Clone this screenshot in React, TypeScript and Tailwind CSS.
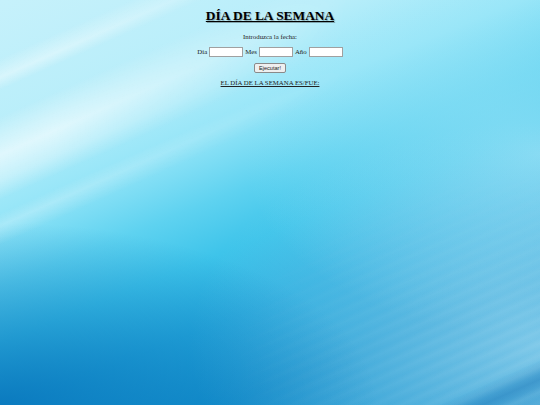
export default function App() {
  return (
    <div
      className="relative w-[540px] h-[405px] overflow-hidden text-black bg-[linear-gradient(158deg,#c6f1fb_0%,#b8eefa_22%,#98e6f8_34%,#5ed2f0_46%,#3ec4ea_55%,#28acde_66%,#1896d0_80%,#1890cc_100%)]"
      style={{ fontFamily: '"Liberation Serif", "Times New Roman", serif' }}
    >
      {/* lighter right side, darker lower left */}
      <div className="absolute inset-0 bg-[radial-gradient(ellipse_55%_45%_at_100%_38%,rgba(160,230,248,0.75),rgba(160,230,248,0)_100%)]" />
      <div className="absolute inset-0 bg-[radial-gradient(ellipse_65%_55%_at_100%_85%,rgba(165,222,244,0.7),rgba(165,222,244,0)_100%)]" />
      <div className="absolute inset-0 bg-[radial-gradient(ellipse_70%_45%_at_0%_100%,rgba(0,105,180,0.75),rgba(0,105,180,0)_100%)]" />
      {/* white streaks in the upper left */}
      <div className="absolute inset-0 [mask-image:linear-gradient(to_right,black_10%,transparent_65%)] bg-[linear-gradient(156deg,rgba(255,255,255,0)_9%,rgba(255,255,255,0.4)_12%,rgba(255,255,255,0)_14%,rgba(255,255,255,0)_18%,rgba(255,255,255,0.6)_24%,rgba(255,255,255,0.35)_28%,rgba(255,255,255,0)_31%,rgba(255,255,255,0)_33%,rgba(255,255,255,0.25)_35%,rgba(255,255,255,0)_38%)]" />
      {/* soft streaks in the lower right */}
      <div className="absolute inset-0 [mask-image:radial-gradient(ellipse_60%_50%_at_100%_90%,black,transparent)] bg-[repeating-linear-gradient(156deg,rgba(255,255,255,0)_0px,rgba(255,255,255,0.08)_5px,rgba(255,255,255,0)_11px)]" />
      <div className="absolute inset-0 bg-[linear-gradient(156deg,rgba(10,110,180,0)_93%,rgba(10,110,180,0.5)_96%,rgba(10,110,180,0.2)_98%)]" />

      <div className="relative flex flex-col items-center">
        <h1 className="mt-[8px] mb-[8px] text-[13.4px] leading-[15px] font-bold underline [text-shadow:1px_1px_1px_rgba(0,0,0,0.3)]">
          DÍA DE LA SEMANA
        </h1>
        <p className="mt-[2px] text-[6.8px] leading-[8px] text-[#222]">Introduzca la fecha:</p>
        <div className="mt-[6px] flex items-center gap-[2px] text-[6.8px] leading-[8px] text-[#222]">
          <span>Día</span>
          <input className="w-[34px] h-[10px] bg-white border border-[#a0a0a0] outline-none" />
          <span>Mes</span>
          <input className="w-[34px] h-[10px] bg-white border border-[#a0a0a0] outline-none" />
          <span>Año</span>
          <input className="w-[34px] h-[10px] bg-white border border-[#a0a0a0] outline-none" />
        </div>
        <button
          className="mt-[6px] h-[10px] px-[4px] text-[5.6px] leading-[8px] bg-[#efefef] border border-[#8a8a8a] rounded-[2px] text-[#222]"
          style={{ fontFamily: '"Liberation Sans", Arial, sans-serif' }}
        >
          Ejecutar!
        </button>
        <p className="mt-[6px] text-[6.8px] leading-[8px] underline text-[#222]">
          EL DÍA DE LA SEMANA ES/FUE:
        </p>
      </div>
    </div>
  );
}
